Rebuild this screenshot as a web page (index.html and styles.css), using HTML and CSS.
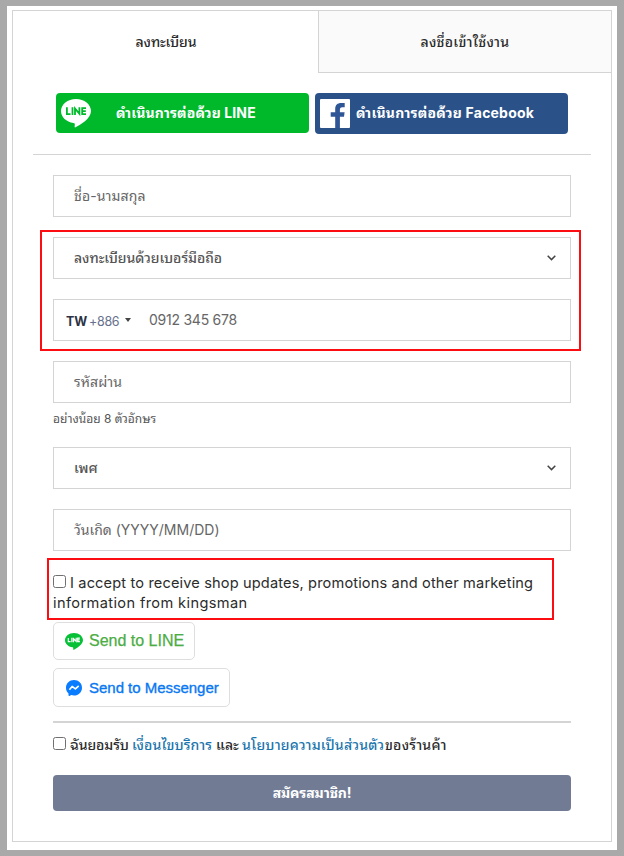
FILE: index.html
```html
<!DOCTYPE html>
<html lang="th">
<head>
<meta charset="utf-8">
<title>ลงทะเบียน</title>
<link rel="stylesheet" href="styles.css">
</head>
<body>
<main class="card">
  <nav class="tabs">
    <a class="tab tab-active"><span class="t-register">ลงทะเบียน</span></a>
    <a class="tab tab-login"><span class="t-login">ลงชื่อเข้าใช้งาน</span></a>
  </nav>
  <div class="social">
    <button class="social-btn line">
      <svg class="line-logo" width="30" height="29" viewBox="0 0 30 29"><path fill="#fff" d="M15 0C6.700 0 0 5.400 0 12.100c0 6 5.300 11 12.500 12 1.300.3 1.600.8 1.200 2.700-.2 1.300 0 2 1.300 1.300C19 26 30 20 30 12.100 30 5.400 23.300 0 15 0z"/><path fill="none" stroke="#00b92b" stroke-width="1.800" d="M5.900 8.200v7h3.600M11.500 8.200v7.900M14 16.100V9.500l4.400 5.300V8.200M25 9.100h-3.800v6.100H25M21.200 12.100h3.600"/></svg>
      <span class="t-line">ดำเนินการต่อด้วย LINE</span>
    </button>
    <button class="social-btn facebook">
      <svg class="fb-logo" width="30" height="29" viewBox="0 0 30 29"><rect width="30" height="29" rx="1" fill="#fff"/><path fill="#2e5596" d="M15.200 29V17.700h-4.500v-4.500h4.500V10c0-4 2.300-6 6-6h3.500v4.200h-2.400c-2 0-2.400.9-2.400 2.400v2.600h4.700l-.6 4.500h-4.100V29z"/></svg>
      <span class="t-fb">ดำเนินการต่อด้วย Facebook</span>
    </button>
  </div>
  <form class="form">
    <div class="field"><span class="t-name">ชื่อ-นามสกุล</span></div>
    <div class="phone-group">
      <div class="field select"><span class="t-method">ลงทะเบียนด้วยเบอร์มือถือ</span>
        <svg class="chevron" width="9" height="6" viewBox="0 0 9 6"><path d="M.7.8 4.500 4.600 8.300.8"/></svg></div>
      <div class="field phone"><b class="t-tw">TW</b><span class="t-code">+886</span><i class="caret"></i><span class="t-phone">0912 345 678</span></div>
      <div class="mark mark-phone"></div>
    </div>
    <div class="field"><span class="t-pass">รหัสผ่าน</span></div>
    <div class="hint"><span class="t-hint">อย่างน้อย 8 ตัวอักษร</span></div>
    <div class="field select"><span class="t-gender">เพศ</span>
      <svg class="chevron" width="9" height="6" viewBox="0 0 9 6"><path d="M.7.8 4.500 4.600 8.300.8"/></svg></div>
    <div class="field birthday"><span class="t-birth">วันเกิด (YYYY/MM/DD)</span></div>
    <div class="consent">
      <div class="consent-row"><i class="check"></i><span class="t-accept">I accept to receive shop updates, promotions and other marketing</span></div>
      <div class="consent-row"><span class="t-info">information from kingsman</span></div>
      <div class="mark mark-consent"></div>
    </div>
    <div class="send send-line">
      <svg width="18" height="17" viewBox="0 0 18 17"><path fill="#06c036" d="M9 0C4 0 0 3.200 0 7.200c0 3.500 3.200 6.400 7.500 7 .8.200.9.600.7 1.700-.1.900.2 1.200.9.800C11.500 15.300 18 11.400 18 7.200 18 3.200 14 0 9 0z"/><path fill="none" stroke="#fff" stroke-width="1.200" d="M3.300 5v3.600h2.300M6.900 4.700v4.500M8.500 9.200V5.700l2.700 2.600V4.700M14.900 5.200h-2.200v3.400h2.200M12.700 6.900h2"/></svg>
      <span class="t-sline">Send to LINE</span>
    </div>
    <div class="send send-messenger">
      <svg width="16" height="16" viewBox="0 0 16 16"><path fill="#0a7cff" d="M8 0C3.500 0 0 3.300 0 7.700c0 2.300.9 4.300 2.500 5.700v1.900c0 .5.400.8.900.6l1.900-.8c.9.200 1.700.4 2.700.4 4.500 0 8-3.300 8-7.800S12.500 0 8 0z"/><path fill="none" stroke="#fff" stroke-width="1.600" stroke-linejoin="round" d="m3.400 9.700 2.700-3.300 3.300 2.400 3.300-3"/></svg>
      <span class="t-smsg">Send to Messenger</span>
    </div>
    <div class="rule"></div>
    <div class="terms"><i class="check"></i><span class="t-agree">ฉันยอมรับ</span><a class="t-terms">เงื่อนไขบริการ</a><span class="t-and">และ</span><a class="t-privacy">นโยบายความเป็นส่วนตัว</a><span class="t-shop">ของร้านค้า</span></div>
    <button class="submit" type="button"><span class="t-submit">สมัครสมาชิก!</span></button>
  </form>
</main>
</body>
</html>
```
FILE: styles.css
```css
* { box-sizing: border-box; }
body {
  margin: 0; height: 856px; padding: 4px 5px 8px; overflow: hidden;
  background: #fff; border: solid #a9a9a9; border-width: 6px 7px;
  font: 14px/20px Inter, "Noto Sans Thai Looped", Loma, Waree, "Noto Sans Thai", sans-serif; color: #2b2b2b;
}
span, a, b { white-space: nowrap; }
button { border: 0; font: inherit; padding: 0; }
.card { height: 832px; border: 1px solid #d4d4d4; background: #fff; }
.tabs { display: flex; height: 62px; }
.tab { display: flex; justify-content: center; align-items: center; font-weight: 500; }
.tab-active { width: 305px; padding-left: 1px; }
.t-register { letter-spacing: -.1px; }
.t-login { letter-spacing: .25px; }
.tab-login { flex: 1; background: #fafafa; border: solid #d4d4d4; border-width: 0 0 1px 1px; }
.social { display: flex; gap: 6px; margin: 0 20px; height: 82px; padding: 20px 23px; border-bottom: 1px solid #d4d4d4; }
.social-btn { display: flex; align-items: center; width: 253px; height: 40px; border-radius: 4px; color: #fff; font-weight: 700; }
.line { background: #00b92b; padding-left: 5px; gap: 25px; }
.t-line { letter-spacing: .1px; }
.facebook { height: 41px; background: #2a5288; padding-left: 5px; gap: 6px; }
.t-fb { letter-spacing: .2px; margin-top: -1px; }
.form { padding: 20px 40px 0; }
.field { display: flex; align-items: center; height: 42px; padding: 0 14px 0 20px; margin-bottom: 20px; border: 1px solid #d4d4d4; color: #666; }
.t-name, .t-pass { letter-spacing: .1px; }
.select { justify-content: space-between; color: #555; font-weight: 500; }
.t-method { letter-spacing: -.05px; }
.chevron path { fill: none; stroke: #444; stroke-width: 1.5; }
.phone-group, .consent { position: relative; }
.mark { position: absolute; border: 2px solid #fb0d12; pointer-events: none; }
.mark-phone { left: -13px; top: -7px; width: 541px; height: 121px; }
.phone { padding-left: 12px; }
.t-tw { color: #2b3244; font-size: 12.5px; width: 21px; margin-top: 3px; }
.t-code { color: #66718c; font-size: 12.5px; margin: 3px 0 0 2px; width: 30px; letter-spacing: -.3px; }
.caret { border: solid transparent; border-width: 4px 3px 0; border-top-color: #444; margin: 0 18px 0 6px; }
.t-phone { letter-spacing: -.25px; }
.hint { height: 24px; margin-top: -14px; margin-bottom: 14px; font-size: 12px; line-height: 20px; color: #555; }
.birthday { margin-bottom: 0; }
.consent { padding-top: 22px; height: 71px; }
.consent-row { display: flex; align-items: center; height: 20px; }
.t-accept { font-size: 14.6px; letter-spacing: .14px; }
.t-info { font-size: 14.6px; letter-spacing: .38px; }
.check { width: 13px; height: 13px; flex: none; border: 1px solid #707070; border-radius: 2.5px; margin: -3px 4px 0 0; background: #fff; }
.mark-consent { left: -6px; top: 7px; width: 507px; height: 62px; }
.send { display: flex; align-items: center; border: 1px solid #dedede; border-radius: 5px; font: 16px/20px "Liberation Sans", Arial, sans-serif; }
.t-sline { -webkit-text-stroke: .25px; }
.t-smsg { font-size: 15px; letter-spacing: -.02px; -webkit-text-stroke: .35px; }
.send-line { width: 142px; height: 38px; padding-left: 11px; gap: 6px; color: #4bad43; }
.send-messenger { width: 177px; height: 39px; margin-top: 8px; padding-left: 12px; gap: 7px; color: #0878f2; }
.rule { height: 2px; background: #d4d4d4; margin: 14px 0 12px; }
.terms { display: flex; align-items: center; height: 20px; font-weight: 500; }
.terms a { color: #1b75ad; }
.t-agree { width: 58px; letter-spacing: -.12px; }
.t-terms { margin-left: 4px; width: 80px; letter-spacing: .1px; }
.t-and { margin-left: 4px; width: 22px; letter-spacing: 0; }
.t-privacy { margin-left: 4px; width: 143px; letter-spacing: .16px; }
.t-shop { letter-spacing: .2px; }
.submit { display: flex; justify-content: center; align-items: center; width: 518px; height: 36px; margin-top: 20px; border-radius: 4px; background: #717b94; color: #fff; font-weight: 700; }
.t-submit { letter-spacing: -.15px; }
```
